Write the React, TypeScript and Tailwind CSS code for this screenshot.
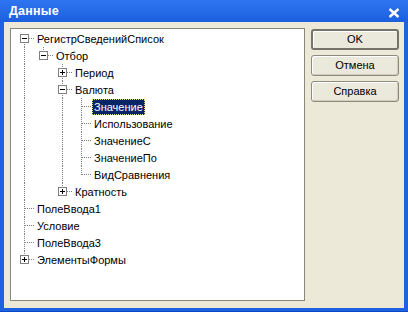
import React from "react";

type Row = {
  label: string;
  depth: number;
  guides: boolean[];
  last: boolean;
  first?: boolean;
  box?: "plus" | "minus";
  selected?: boolean;
};

const rows: Row[] = [
  { label: "РегистрСведенийСписок", depth: 0, guides: [], last: false, first: true, box: "minus" },
  { label: "Отбор", depth: 1, guides: [true], last: true, box: "minus" },
  { label: "Период", depth: 2, guides: [true, false], last: false, box: "plus" },
  { label: "Валюта", depth: 2, guides: [true, false], last: false, box: "minus" },
  { label: "Значение", depth: 3, guides: [true, false, true], last: false, selected: true },
  { label: "Использование", depth: 3, guides: [true, false, true], last: false },
  { label: "ЗначениеС", depth: 3, guides: [true, false, true], last: false },
  { label: "ЗначениеПо", depth: 3, guides: [true, false, true], last: false },
  { label: "ВидСравнения", depth: 3, guides: [true, false, true], last: true },
  { label: "Кратность", depth: 2, guides: [true, false], last: true, box: "plus" },
  { label: "ПолеВвода1", depth: 0, guides: [], last: false },
  { label: "Условие", depth: 0, guides: [], last: false },
  { label: "ПолеВвода3", depth: 0, guides: [], last: false },
  { label: "ЭлементыФормы", depth: 0, guides: [], last: true, box: "plus" },
];

function Guide({ on }: { on: boolean }) {
  return (
    <div className="relative w-[19px] h-[17px] shrink-0">
      {on && <div className="absolute left-[9px] top-0 bottom-0 w-0 border-l border-dotted border-[#808080]" />}
    </div>
  );
}

function Connector({ row }: { row: Row }) {
  return (
    <div className="relative w-[19px] h-[17px] shrink-0">
      {row.first ? (
        <div className="absolute left-[9px] top-[8px] bottom-0 w-0 border-l border-dotted border-[#808080]" />
      ) : row.last ? (
        <div className="absolute left-[9px] top-0 h-[9px] w-0 border-l border-dotted border-[#808080]" />
      ) : (
        <div className="absolute left-[9px] top-0 bottom-0 w-0 border-l border-dotted border-[#808080]" />
      )}
      <div className="absolute left-[9px] right-0 top-[8px] h-0 border-t border-dotted border-[#808080]" />
      {row.box && (
        <div className="absolute left-[5px] top-[4px] w-[9px] h-[9px] bg-white border border-[#808080]">
          <div className="absolute left-[1px] top-[3px] w-[5px] h-[1px] bg-black" />
          {row.box === "plus" && <div className="absolute left-[3px] top-[1px] w-[1px] h-[5px] bg-black" />}
        </div>
      )}
    </div>
  );
}

function TreeRow({ row }: { row: Row }) {
  return (
    <div className="flex items-center h-[17px]">
      {row.guides.map((g, i) => (
        <Guide key={i} on={g} />
      ))}
      <Connector row={row} />
      <div
        className={
          row.selected
            ? "ml-[1px] px-[2px] h-[16px] leading-[16px] bg-[#0a246a] text-white outline outline-1 outline-dotted outline-[#e8e070] -outline-offset-1"
            : "ml-[1px] px-[2px] h-[16px] leading-[16px] text-black"
        }
      >
        {row.label}
      </div>
    </div>
  );
}

function Btn({ children, def }: { children: React.ReactNode; def?: boolean }) {
  return (
    <div
      className={
        "w-[88px] h-[21px] flex items-center justify-center rounded-[3px] bg-[#ebe8dc] text-black " +
        (def
          ? "border-2 border-[#76746a] shadow-[inset_1px_1px_0_#ffffff]"
          : "border border-[#8d8a7e] shadow-[inset_1px_1px_0_#ffffff,inset_-1px_-1px_0_#d0ccbe]")
      }
    >
      {children}
    </div>
  );
}

export default function App() {
  return (
    <div
      className="w-[408px] h-[312px] flex flex-col bg-[#1f62e0] text-[11px]"
      style={{ fontFamily: '"Liberation Sans", Arial, sans-serif' }}
    >
      <div className="h-[22px] flex items-center justify-between pl-[9px] pr-[8px] bg-gradient-to-b from-[#2f74f0] to-[#1c60e0]">
        <span className="text-white font-bold text-[12.5px] tracking-[0.2px]">Данные</span>
        <svg width="12" height="10" viewBox="0 0 12 10" className="mt-[3px]">
          <path d="M1.5 1 L10.5 9 M10.5 1 L1.5 9" stroke="white" strokeWidth="2.4" />
        </svg>
      </div>
      <div className="flex-1 mx-[4px] bg-[#ece9d8] flex gap-[6px] pl-[6px] pt-[6px] pb-[7px]">
        <div className="w-[295px] h-[273px] bg-white border border-[#8a877c] pt-[1px] pl-[4px]">
          {rows.map((r, i) => (
            <TreeRow key={i} row={r} />
          ))}
        </div>
        <div className="flex flex-col gap-[5px] pt-[1px]">
          <Btn def>OK</Btn>
          <Btn>Отмена</Btn>
          <Btn>Справка</Btn>
        </div>
      </div>
      <div className="h-[4px] bg-[#1f62e0] border-b border-[#0b48c8]" />
    </div>
  );
}
